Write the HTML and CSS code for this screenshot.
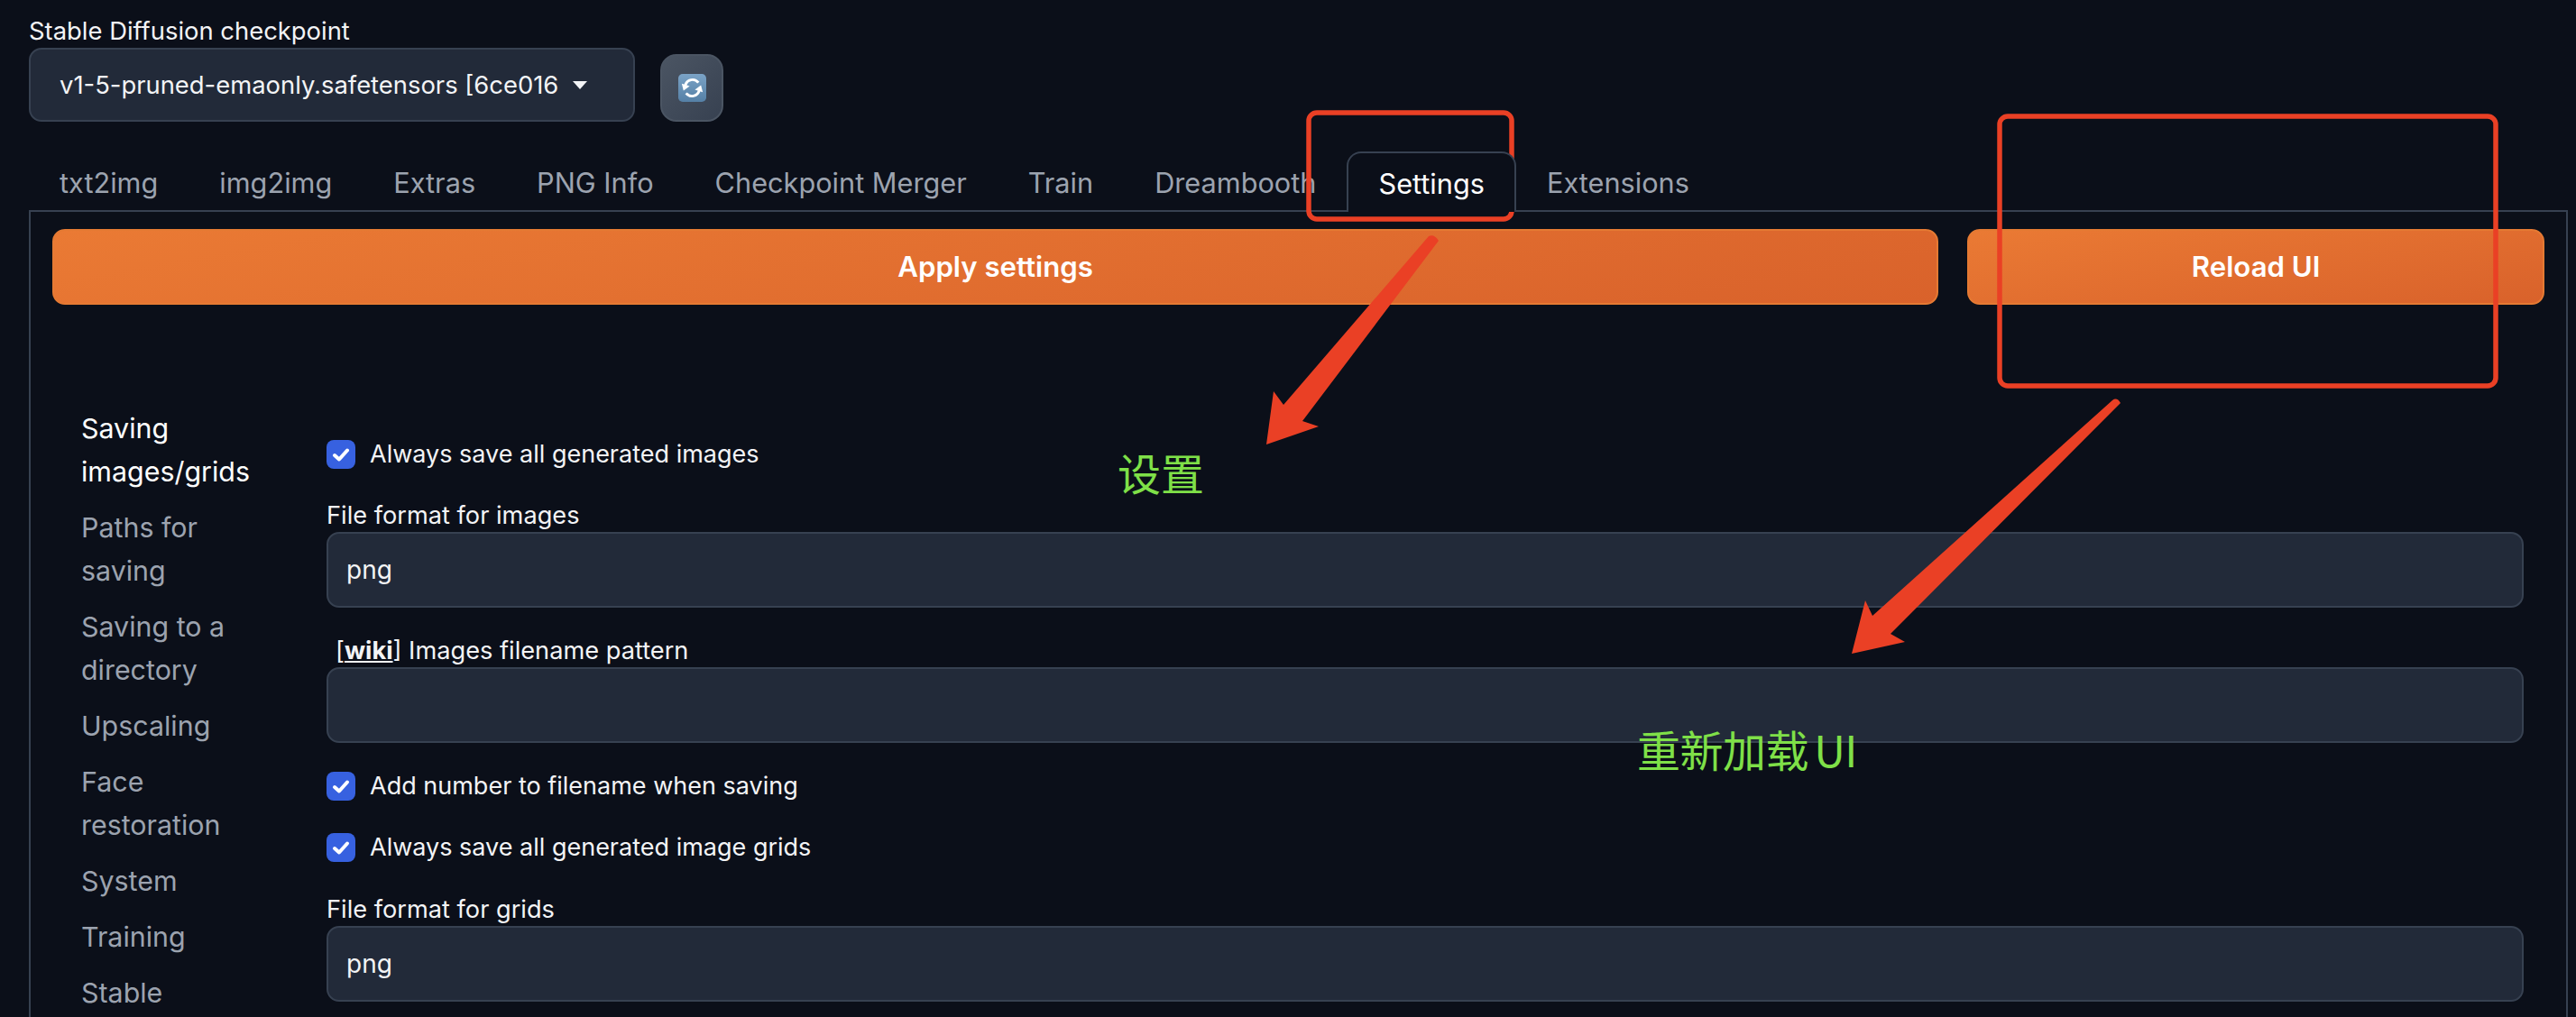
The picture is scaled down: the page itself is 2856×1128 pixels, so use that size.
FILE: index.html
```html
<!DOCTYPE html>
<html lang="en">
<head>
<meta charset="utf-8">
<title>Stable Diffusion web UI settings</title>
<link rel="stylesheet" href="styles.css">
</head>
<body>
<div class="page">
  <header class="top">
    <div class="ckpt">
      <div class="ckpt-label">Stable Diffusion checkpoint</div>
      <div class="select"><span class="select-text">v1-5-pruned-emaonly.safetensors [6ce016</span><span class="caret"></span></div>
    </div>
    <button class="refresh" type="button">
      <svg class="refresh-icon" width="31" height="31" viewBox="0 0 32 32">
        <defs><linearGradient id="rg" x1="0" y1="0" x2="0" y2="1"><stop offset="0" stop-color="#7ba3c6"/><stop offset="1" stop-color="#5580a6"/></linearGradient></defs>
        <rect width="32" height="32" rx="5" fill="url(#rg)"/>
        <path d="M8 13a8.500 8.500 0 0 1 15-3" fill="none" stroke="#fff" stroke-width="3"/>
        <path d="M24 19a8.500 8.500 0 0 1-15 3" fill="none" stroke="#fff" stroke-width="3"/>
        <path d="M4 11l9 3-7 5z" fill="#fff"/>
        <path d="M28 21l-9-3 7-5z" fill="#fff"/>
      </svg>
    </button>
  </header>
  <nav class="tabs">
    <span class="tab">txt2img</span>
    <span class="tab">img2img</span>
    <span class="tab">Extras</span>
    <span class="tab">PNG Info</span>
    <span class="tab">Checkpoint Merger</span>
    <span class="tab">Train</span>
    <span class="tab">Dreambooth</span>
    <span class="tab tab-active">Settings</span>
    <span class="tab">Extensions</span>
  </nav>
  <main class="panel">
    <div class="actions">
      <button class="primary primary-apply" type="button">Apply settings</button>
      <button class="primary primary-reload" type="button">Reload UI</button>
    </div>
    <div class="settings">
      <aside class="side">
        <a class="side-item side-active">Saving images/grids</a>
        <a class="side-item">Paths for saving</a>
        <a class="side-item">Saving to a directory</a>
        <a class="side-item">Upscaling</a>
        <a class="side-item">Face restoration</a>
        <a class="side-item">System</a>
        <a class="side-item">Training</a>
        <a class="side-item">Stable Diffusion</a>
      </aside>
      <section class="form">
        <label class="check check-first"><span class="box"><svg width="32" height="32" viewBox="0 0 32 32"><path d="M9 17l5 4.500 9-10" fill="none" stroke="#fff" stroke-width="4" stroke-linecap="round" stroke-linejoin="round"/></svg></span>Always save all generated images</label>
        <div class="field field-format">
          <div class="field-label">File format for images</div>
          <div class="input">png</div>
        </div>
        <div class="field field-pattern">
          <div class="field-label field-label-wiki">[<b class="wiki">wiki</b>] Images filename pattern</div>
          <div class="input"></div>
        </div>
        <label class="check check-second"><span class="box"><svg width="32" height="32" viewBox="0 0 32 32"><path d="M9 17l5 4.500 9-10" fill="none" stroke="#fff" stroke-width="4" stroke-linecap="round" stroke-linejoin="round"/></svg></span>Add number to filename when saving</label>
        <label class="check check-third"><span class="box"><svg width="32" height="32" viewBox="0 0 32 32"><path d="M9 17l5 4.500 9-10" fill="none" stroke="#fff" stroke-width="4" stroke-linecap="round" stroke-linejoin="round"/></svg></span>Always save all generated image grids</label>
        <div class="field field-grids">
          <div class="field-label">File format for grids</div>
          <div class="input">png</div>
        </div>
      </section>
    </div>
  </main>
  <svg class="marks" width="2856" height="1128" viewBox="0 0 2856 1128">
    <rect x="1451" y="125" width="225" height="118" rx="9" fill="none" stroke="#ea4025" stroke-width="5.500"/>
    <rect x="2217" y="129" width="550" height="299" rx="9" fill="none" stroke="#ea4025" stroke-width="5.500"/>
    <path d="M1584 262Q1590 259 1595 267L1444 467 1462 473 1404 493 1412 434 1423 449Z" fill="#ea4025"/>
    <path d="M2342 444Q2347 440 2351 447L2096 703 2112 712 2053 725 2068 666 2076 683Z" fill="#ea4025"/>
  </svg>
  <div class="note note-settings">设置</div>
  <div class="note note-reload">重新加载 UI</div>
</div>
</body>
</html>
```
FILE: styles.css
```css
* { box-sizing: border-box; }
html, body { margin: 0; height: 100%; overflow: hidden; background: #0b0f19; }
body { font-family: Inter, "Noto Sans CJK SC", sans-serif; color: #f3f4f6; }
.page { position: relative; width: 2856px; height: 1128px; overflow: hidden; padding: 0 9px 0 32px; }

.top { display: flex; align-items: flex-end; gap: 28px; height: 135px; }
.ckpt { width: 672px; }
.ckpt-label { font-size: 27.4px; line-height: 34px; height: 53px; padding-top: 17px; }
.select { display: flex; align-items: center; height: 82px; padding: 0 32px; background: #222a39; border: 2px solid #374151; border-radius: 14px; font-size: 27.4px; white-space: nowrap; }
.select-text { overflow: hidden; }
.caret { width: 0; height: 0; margin-left: 16px; border: 8px solid transparent; border-top: 9px solid #f3f4f6; border-bottom: 0; }
.refresh { display: flex; align-items: center; justify-content: center; width: 70px; height: 75px; padding: 0; background: linear-gradient(135deg, #4b5563, #374151); border: 2px solid #4b5563; border-radius: 18px; }

.tabs { display: flex; height: 98px; align-items: flex-end; }
.tab { height: 65px; line-height: 70px; padding: 0 34px; font-size: 30.7px; color: #9ca3af; white-space: nowrap; }
.tab-active { position: relative; z-index: 1; color: #fff; border: 2px solid #374151; border-bottom: 0; border-radius: 16px 16px 0 0; height: 67px; margin-bottom: -2px; padding: 0 33px; background: #0b0f19; line-height: 68px; }

.panel { height: 900px; border: 2px solid #374151; padding: 19px 24px 0; border-bottom: 0; }
.actions { display: flex; gap: 32px; }
.primary { height: 84px; border: 2px solid #e57a33; border-radius: 14px; color: #fff; font: 600 31.2px Inter, sans-serif; background: linear-gradient(170deg, #ea7a34, #d9622b); }
.primary-apply { width: 2092px; }
.primary-reload { width: 640px; }

.settings { display: flex; padding-top: 113px; }
.side { width: 304px; flex: none; padding: 0 71px 0 32px; }
.side-item { display: block; padding-bottom: 14px; font-size: 30.4px; line-height: 48px; color: #9ca3af; }
.side-active { color: #fff; }
.form { flex: 1; margin-right: 23px; }
.check { display: flex; align-items: center; gap: 16px; font-size: 27px; line-height: 32px; }
.box { display: block; width: 32px; height: 32px; background: #3761e0; border-radius: 8px; }
.box svg { display: block; }
.check-first { margin-top: 37px; }
.field-label { font-size: 27.2px; line-height: 36px; }
.field-label-wiki { padding-left: 10px; }
.wiki { font-weight: 700; text-decoration: underline; }
.input { height: 84px; padding: 0 20px; background: #222a39; border: 2px solid #374151; border-radius: 14px; font-size: 28px; line-height: 80px; }
.field-format { margin-top: 34px; }
.field-pattern { margin-top: 30px; }
.check-second { margin-top: 32px; }
.check-third { margin-top: 36px; }
.field-grids { margin-top: 35px; }

.marks { position: absolute; left: 0; top: 0; pointer-events: none; }
.note { position: absolute; color: #7fe048; font-family: "Noto Sans CJK SC", sans-serif; font-size: 48px; line-height: 60px; white-space: nowrap; }
.note-settings { left: 1239px; top: 493px; }
.note-reload { left: 1815px; top: 800px; word-spacing: -4px; letter-spacing: -0.5px; }
```
